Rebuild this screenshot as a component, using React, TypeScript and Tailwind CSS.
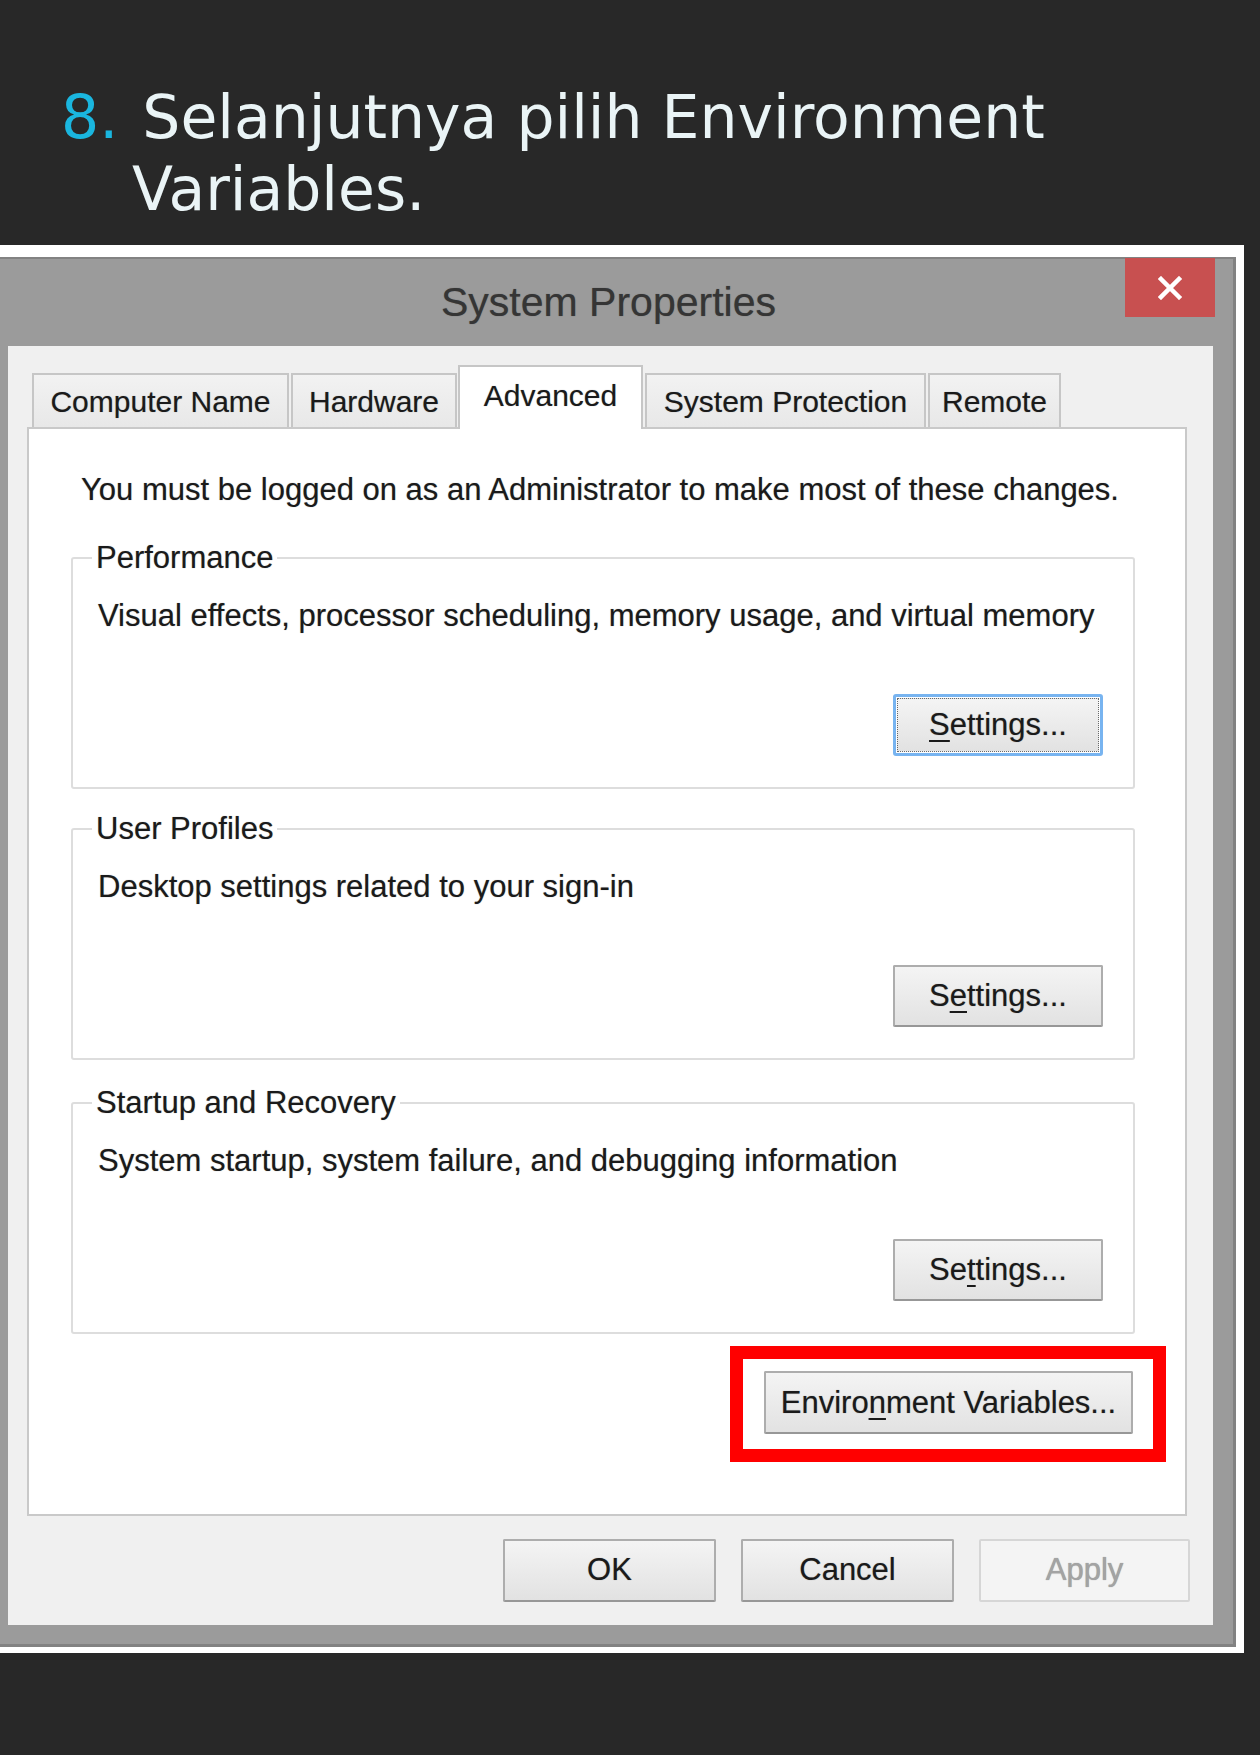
import React from "react";

const ui = "font-['Liberation_Sans',Arial,sans-serif]";

type BtnProps = {
  children: React.ReactNode;
  className?: string;
  focused?: boolean;
  disabled?: boolean;
};

function WinButton({ children, className = "", focused = false, disabled = false }: BtnProps) {
  if (focused) {
    return (
      <div className={`rounded-[3px] border-[3px] border-[#78b4f0] p-[1px] ${className}`}>
        <div className="flex h-full w-full items-center justify-center border border-dotted border-[#6a6a6a] bg-linear-to-b from-[#f4f4f4] to-[#e2e2e2] text-[31px] text-[#1a1a1a]">
          {children}
        </div>
      </div>
    );
  }
  return (
    <div
      className={`flex items-center justify-center rounded-[2px] border-2 text-[31px] ${
        disabled
          ? "border-[#d6d6d6] bg-[#f4f4f4] text-[#a3a3a3]"
          : "border-[#adadad] border-b-[#979797] bg-linear-to-b from-[#f4f4f4] to-[#e2e2e2] text-[#1a1a1a]"
      } ${className}`}
    >
      {children}
    </div>
  );
}

function Mn({ children }: { children: React.ReactNode }) {
  return <span className="underline decoration-2 underline-offset-[5px]">{children}</span>;
}

type Group = {
  label: string;
  desc: string;
  button: React.ReactNode;
  focused?: boolean;
  mt: string;
};

const groups: Group[] = [
  {
    label: "Performance",
    desc: "Visual effects, processor scheduling, memory usage, and virtual memory",
    button: (
      <>
        <Mn>S</Mn>ettings...
      </>
    ),
    focused: true,
    mt: "mt-[32px]",
  },
  {
    label: "User Profiles",
    desc: "Desktop settings related to your sign-in",
    button: (
      <>
        S<Mn>e</Mn>ttings...
      </>
    ),
    mt: "mt-[22px]",
  },
  {
    label: "Startup and Recovery",
    desc: "System startup, system failure, and debugging information",
    button: (
      <>
        Se<Mn>t</Mn>tings...
      </>
    ),
    mt: "mt-[25px]",
  },
];

const tabs = [
  { label: "Computer Name", w: "w-[257px]" },
  { label: "Hardware", w: "w-[166px]" },
  { label: "Advanced", w: "w-[185px]", active: true },
  { label: "System Protection", w: "w-[281px]" },
  { label: "Remote", w: "w-[133px]" },
];

export default function App() {
  return (
    <div className="flex h-[1755px] w-[1260px] flex-col bg-[#282828]">
      {/* step heading */}
      <p className="pl-[132px] pt-[81px] -indent-[71px] font-['DejaVu_Sans',Verdana,sans-serif] text-[60px] leading-[72px] text-[#eaf4f6]">
        <span className="mr-[5px] text-[#1ab6df]">8.</span> Selanjutnya pilih Environment
        <br />
        Variables.
      </p>

      {/* screenshot frame */}
      <div className={`mt-[20px] w-[1244px] bg-white pb-[6px] pr-[8px] pt-[12px] ${ui} [text-shadow:0_0_1px_rgba(0,0,0,0.4)]`}>
        <div className="w-[1236px] border-b-[3px] border-r-[3px] border-t-2 border-[#828282] bg-[#9b9b9b] pb-[19px]">
          {/* title bar */}
          <div className="relative flex h-[87px] items-center justify-center pr-[16px]">
            <span className="text-[41px] text-[#353535]">System Properties</span>
            <div className="absolute right-[18px] top-[-1px] flex h-[59px] w-[90px] items-center justify-center bg-[#c85050] [text-shadow:none]">
              <svg width="24" height="24" viewBox="0 0 24 24">
                <path d="M3 3 L21 21 M21 3 L3 21" stroke="#fff" strokeWidth="4.5" strokeLinecap="square" />
              </svg>
            </div>
          </div>

          {/* client area */}
          <div className="ml-[8px] w-[1205px] bg-[#f0f0f0] pb-[23px] pl-[19px] pr-[26px] pt-[19px]">
            {/* tab strip */}
            <div className="ml-[5px] flex h-[62px] items-end gap-[2px]">
              {tabs.map((t) =>
                t.active ? (
                  <div
                    key={t.label}
                    className={`relative z-10 -mb-[2px] -ml-[1px] flex h-[64px] items-center justify-center border-2 border-b-0 border-[#c6c6c6] bg-white pb-[6px] text-[30px] text-[#1a1a1a] ${t.w}`}
                  >
                    {t.label}
                  </div>
                ) : (
                  <div
                    key={t.label}
                    className={`flex h-[54px] items-center justify-center border-2 border-b-0 border-[#c6c6c6] bg-linear-to-b from-[#f2f2f2] to-[#e8e8e8] text-[30px] text-[#1a1a1a] ${t.w}`}
                  >
                    {t.label}
                  </div>
                )
              )}
            </div>

            {/* tab page */}
            <div className="flex h-[1089px] flex-col border-2 border-[#c9c9c9] bg-white pl-[42px] pr-[50px] pt-[43px] text-[31px] leading-[36px] text-[#1a1a1a]">
              <div className="ml-[10px]">You must be logged on as an Administrator to make most of these changes.</div>

              {groups.map((g) => (
                <fieldset
                  key={g.label}
                  className={`rounded-[3px] border-2 border-[#dddddd] pb-[31px] pl-[25px] pr-[30px] ${g.mt}`}
                >
                  <legend className="-ml-[6px] px-[4px] leading-[36px]">{g.label}</legend>
                  <div className="mt-[22px]">{g.desc}</div>
                  <div className="mt-[60px] flex justify-end">
                    <WinButton focused={g.focused} className="h-[62px] w-[210px]">
                      {g.button}
                    </WinButton>
                  </div>
                </fieldset>
              ))}

              {/* highlighted environment variables button */}
              <div className="-mr-[31px] mt-[12px] flex justify-end">
                <div className="border-[13px] border-[#ff0000] pb-[15px] pl-[21px] pr-[20px] pt-[12px]">
                  <WinButton className="h-[63px] w-[369px]">
                    <span>
                      Enviro<Mn>n</Mn>ment Variables...
                    </span>
                  </WinButton>
                </div>
              </div>
            </div>

            {/* dialog buttons */}
            <div className="mt-[23px] flex justify-end gap-[25px]">
              <WinButton className="h-[63px] w-[213px]">OK</WinButton>
              <WinButton className="h-[63px] w-[213px]">Cancel</WinButton>
              <WinButton disabled className="-mr-[3px] h-[63px] w-[211px]">
                Apply
              </WinButton>
            </div>
          </div>
        </div>
      </div>
    </div>
  );
}
